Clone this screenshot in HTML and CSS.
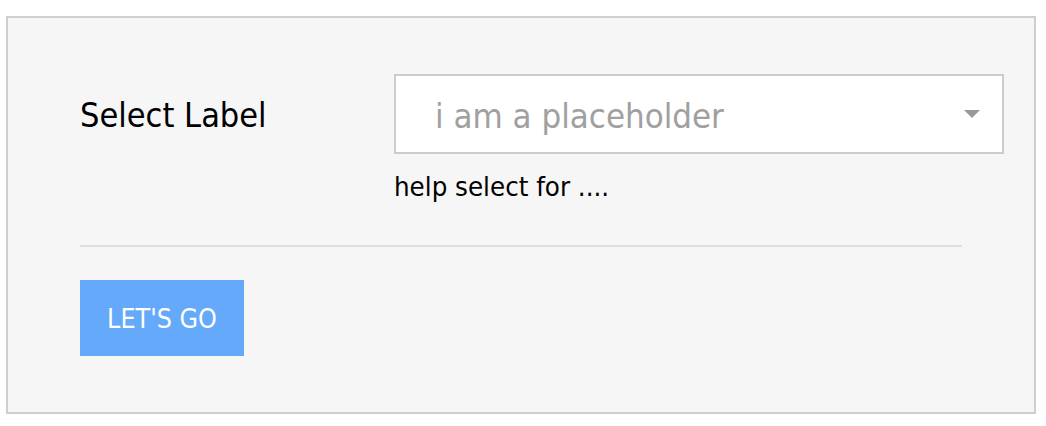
FILE: index.html
```html
<!DOCTYPE html>
<html lang="en">
<head>
<meta charset="utf-8">
<title>Select form</title>
<link rel="stylesheet" href="styles.css">
</head>
<body>
<div class="page">
  <form class="card">
    <div class="field-row">
      <label class="field-label" for="sel">Select Label</label>
      <div class="field-control">
        <div class="select" id="sel" tabindex="0">
          <span class="select-placeholder">i am a placeholder</span>
          <svg class="select-arrow" width="16" height="8" viewBox="0 0 16 8" aria-hidden="true"><path d="M0 0H16L8 8Z" fill="#999"/></svg>
        </div>
        <div class="field-help">help select for ....</div>
      </div>
    </div>
    <hr class="divider">
    <button type="button" class="btn-primary">LET'S GO</button>
  </form>
</div>
</body>
</html>
```
FILE: styles.css
```css
html, body {
  margin: 0;
  padding: 0;
  background: #ffffff;
}
body {
  font-family: "DejaVu Sans Condensed", "DejaVu Sans", sans-serif;
  color: #000;
}
.page {
  padding: 16px 10px 12px 6px;
}
.card {
  margin: 0;
  background: #f6f6f6;
  border: 2px solid #cfcfcf;
  padding: 56px 30px 56px 72px;
  display: flex;
  flex-direction: column;
  align-items: flex-start;
}
.field-row {
  display: flex;
  align-items: flex-start;
  align-self: stretch;
}
.field-label {
  width: 314px;
  flex: none;
  height: 80px;
  display: flex;
  align-items: center;
  padding-top: 1px;
  box-sizing: border-box;
  font-size: 34px;
  line-height: 40px;
  color: #000;
}
.field-control {
  flex: 1;
  display: flex;
  flex-direction: column;
}
.select {
  box-sizing: border-box;
  height: 80px;
  background: #fff;
  border: 2px solid #cccccc;
  display: flex;
  align-items: center;
  padding: 4px 22px 0 39px;
  outline: none;
}
.select-placeholder {
  flex: 1;
  font-size: 34.5px;
  line-height: 40px;
  color: #a0a0a0;
}
.select-arrow {
  flex: none;
  display: block;
  margin-top: -4px;
}
.field-help {
  margin-top: 17px;
  font-size: 27.4px;
  line-height: 32px;
  color: #000;
}
.divider {
  align-self: stretch;
  margin: 42px 42px 0 0;
  border: 0;
  height: 2px;
  background: #dedede;
}
.btn-primary {
  margin-top: 33px;
  width: 164px;
  height: 76px;
  border: 0;
  background: #64a9fa;
  color: #fff;
  font-family: "DejaVu Sans Condensed", "DejaVu Sans", sans-serif;
  font-size: 26.6px;
  padding: 0;
  cursor: pointer;
}
```
